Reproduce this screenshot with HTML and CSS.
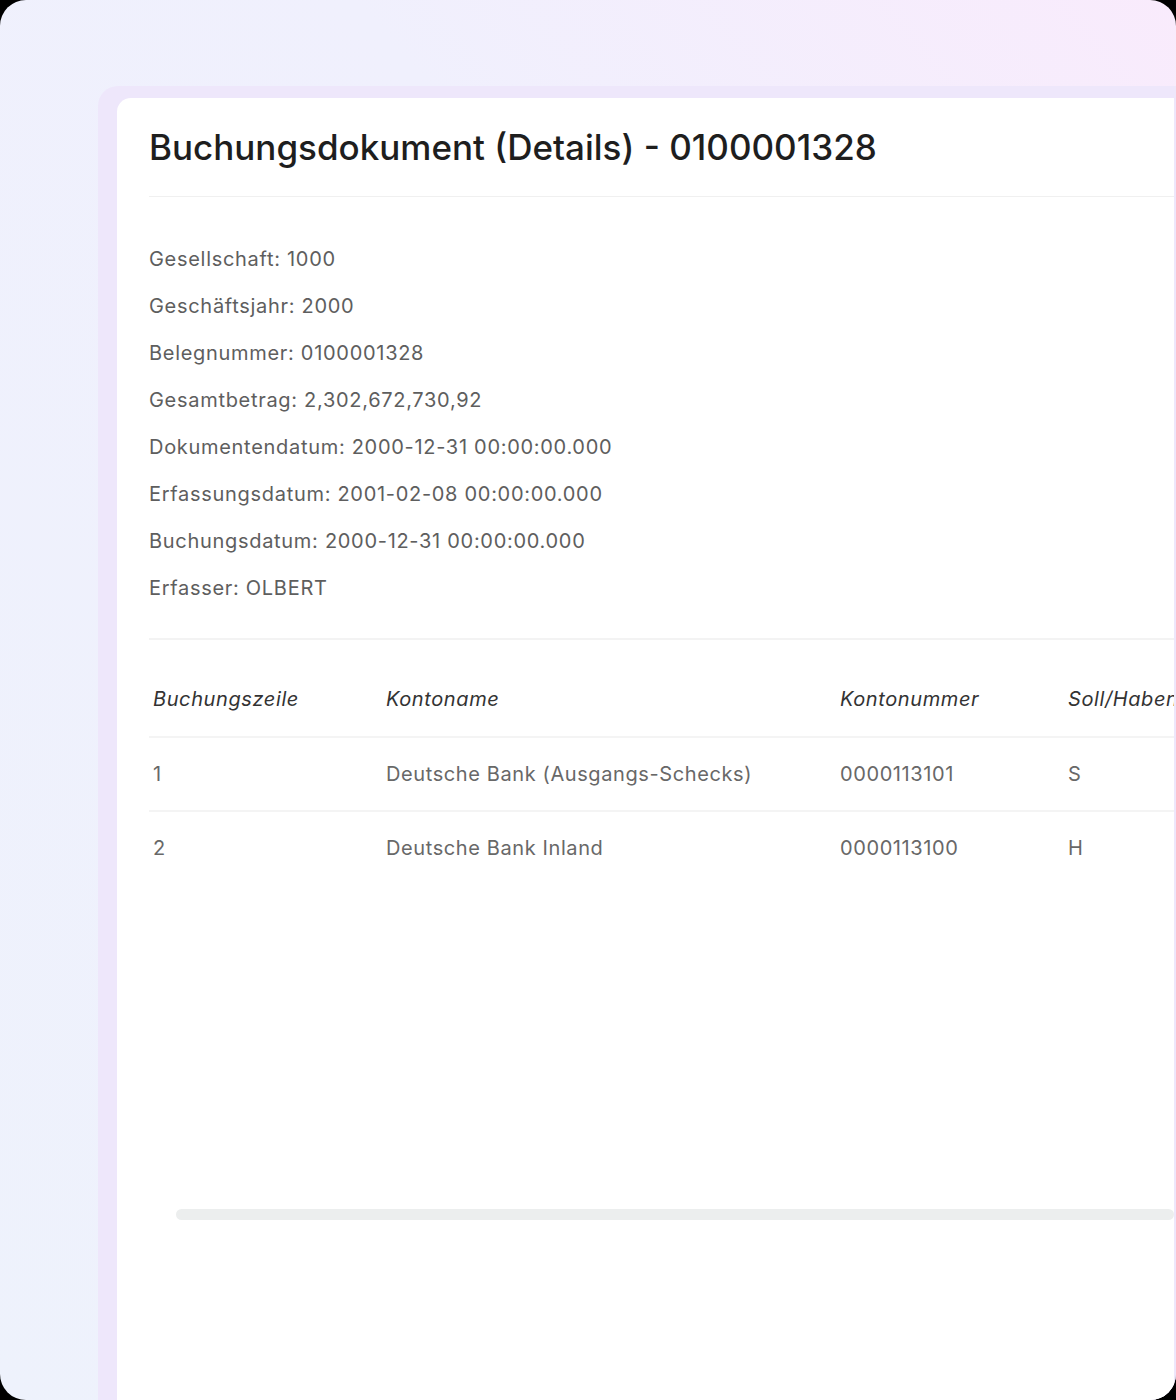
FILE: index.html
```html
<!DOCTYPE html>
<html lang="de">
  <head>
    <meta charset="utf-8">
    <title>Buchungsdokument</title>
    <link rel="stylesheet" href="styles.css">
  </head>
  <body>
    <div class="frame">
      <div class="window">
        <div class="card">
          <div class="card-header">
            <h1>Buchungsdokument (Details) - 0100001328</h1>
          </div>

          <ul class="details">
            <li>Gesellschaft: 1000</li>
            <li>Geschäftsjahr: 2000</li>
            <li>Belegnummer: 0100001328</li>
            <li>Gesamtbetrag: 2,302,672,730,92</li>
            <li>Dokumentendatum: 2000-12-31 00:00:00.000</li>
            <li>Erfassungsdatum: 2001-02-08 00:00:00.000</li>
            <li>Buchungsdatum: 2000-12-31 00:00:00.000</li>
            <li>Erfasser: OLBERT</li>
          </ul>

          <div class="table-scroll">
            <table class="lines">
              <thead>
                <tr>
                  <th class="col-line">Buchungszeile</th>
                  <th class="col-name">Kontoname</th>
                  <th class="col-number">Kontonummer</th>
                  <th class="col-side">Soll/Haben</th>
                </tr>
              </thead>
              <tbody>
                <tr>
                  <td>1</td>
                  <td>Deutsche Bank (Ausgangs-Schecks)</td>
                  <td>0000113101</td>
                  <td>S</td>
                </tr>
                <tr>
                  <td>2</td>
                  <td>Deutsche Bank Inland</td>
                  <td>0000113100</td>
                  <td>H</td>
                </tr>
              </tbody>
            </table>
          </div>
          <div class="scrollbar"></div>
        </div>
      </div>
    </div>
  </body>
</html>
```

FILE: styles.css
```css
body {
  margin: 0;
  background: #000;
  font-family: Inter, "Noto Sans", sans-serif;
}

.frame {
  width: 1176px;
  height: 1400px;
  box-sizing: border-box;
  border-radius: 26px;
  overflow: hidden;
  padding: 86px 0 0 98px;
  background: linear-gradient(to bottom left, #f9ebfc 0%, #f0f0fd 35%, #eef2fc 100%);
}

.window {
  height: 100%;
  box-sizing: border-box;
  padding: 12px 2px 0 19px;
  background: #eee7fb;
  border-top-left-radius: 20px;
}

.card {
  height: 100%;
  box-sizing: border-box;
  padding-left: 32px;
  background: #fff;
  border-top-left-radius: 14px;
  overflow: hidden;
}

.card-header {
  padding: 28px 0;
  border-bottom: 1px solid #f0f0f0;
}

h1 {
  margin: 0;
  font-size: 35px;
  line-height: 42px;
  font-weight: 500;
  color: #1e1e1e;
}

.details {
  list-style: none;
  margin: 0;
  padding: 39px 0 26px;
  border-bottom: 2px solid #f3f3f3;
}

.details li {
  font-size: 20px;
  line-height: 47px;
  color: #5e5e5e;
  letter-spacing: 0.7px;
}

.table-scroll {
  height: 566px;
  overflow: hidden;
}

.lines {
  width: 1300px;
  margin-top: 24px;
  border-collapse: collapse;
  table-layout: fixed;
  text-align: left;
}

.lines th,
.lines td {
  padding: 18px 4px;
  font-size: 20px;
  line-height: 36px;
  letter-spacing: 0.6px;
  white-space: nowrap;
  border-bottom: 2px solid #f4f4f4;
}

.lines th {
  padding: 17px 4px 19px;
  font-weight: 400;
  font-style: italic;
  color: #333;
}

.lines td {
  color: #686868;
}

.lines tbody tr:last-child td {
  border-bottom: none;
}

.col-line { width: 225px; }
.col-name { width: 446px; }
.col-number { width: 220px; }

.scrollbar {
  height: 11px;
  margin: 3px 0 0 27px;
  border-radius: 6px;
  background: #eceeee;
}
```
